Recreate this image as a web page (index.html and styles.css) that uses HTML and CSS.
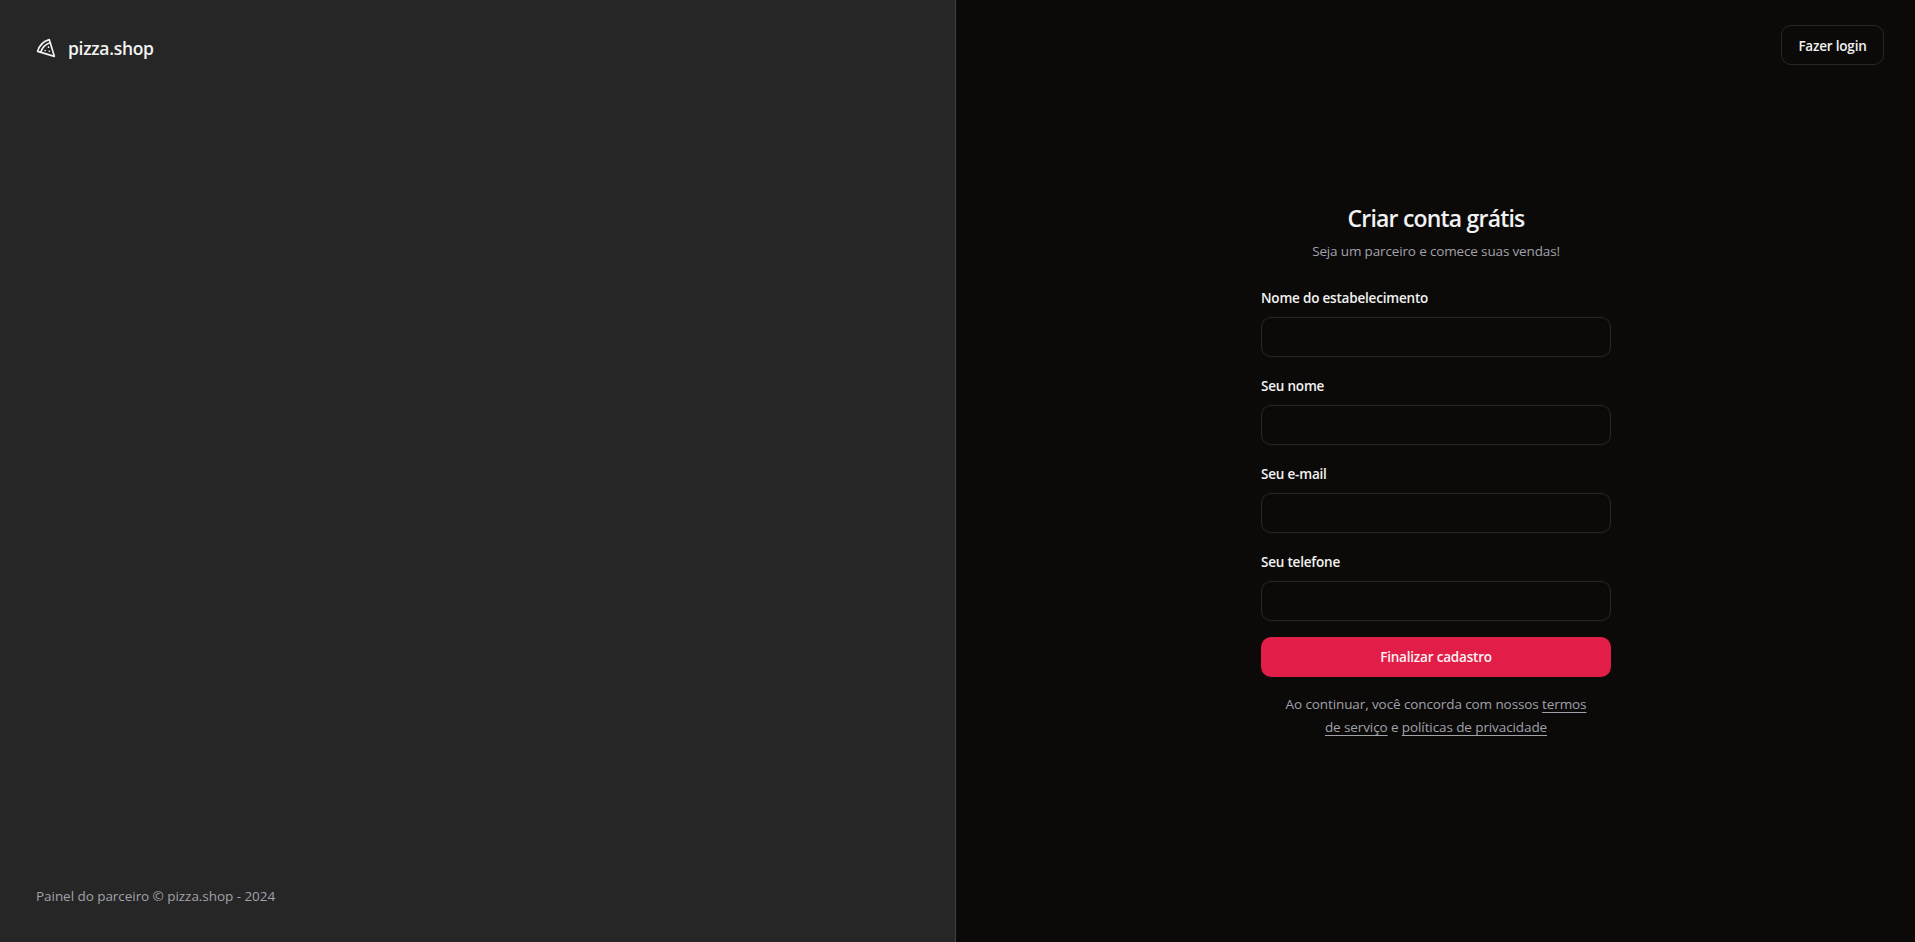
FILE: index.html
```html
<!DOCTYPE html>
<html lang="pt-BR">
<head>
<meta charset="utf-8">
<title>Cadastro | pizza.shop</title>
<link rel="stylesheet" href="styles.css">
</head>
<body>
<div class="page">
  <aside class="brand-panel">
    <div class="brand">
      <svg class="brand-icon" viewBox="0 0 24 24" fill="none" stroke="currentColor" stroke-width="2" stroke-linecap="round" stroke-linejoin="round" aria-hidden="true">
        <path d="M15 11h.01"/><path d="M11 15h.01"/><path d="M16 16h.01"/>
        <path d="m2 16 20 6-6-20A20 20 0 0 0 2 16"/>
        <path d="M5.71 17.11a17.04 17.04 0 0 1 11.4-11.4"/>
      </svg>
      <span class="brand-name">pizza.shop</span>
    </div>
    <footer class="brand-footer">Painel do parceiro © pizza.shop - 2024</footer>
  </aside>
  <main class="form-panel">
    <a class="login-link" href="#">Fazer login</a>
    <div class="form-wrap">
      <div class="form-head">
        <h1 class="form-title">Criar conta grátis</h1>
        <p class="form-sub">Seja um parceiro e comece suas vendas!</p>
      </div>
      <form class="form">
        <div class="field"><label class="label" for="a">Nome do estabelecimento</label><input class="input" id="a" type="text"></div>
        <div class="field"><label class="label" for="b">Seu nome</label><input class="input" id="b" type="text"></div>
        <div class="field"><label class="label" for="c">Seu e-mail</label><input class="input" id="c" type="email"></div>
        <div class="field"><label class="label" for="d">Seu telefone</label><input class="input" id="d" type="tel"></div>
        <button class="submit" type="button">Finalizar cadastro</button>
        <p class="legal">Ao continuar, você concorda com nossos <a href="#">termos de serviço</a> e <a href="#">políticas de privacidade</a></p>
      </form>
    </div>
  </main>
</div>
</body>
</html>
```
FILE: styles.css
```css
* { box-sizing: border-box; }
html, body { margin: 0; height: 100%; }
body {
  background: #0c0a09;
  color: #f2f2f2;
  font-family: "Open Sans", "Noto Sans", sans-serif;
  font-size: 14px;
}
.page {
  display: grid;
  grid-template-columns: 956px 959px;
  height: 942px;
}
.brand-panel {
  display: flex;
  flex-direction: column;
  justify-content: space-between;
  padding: 36px;
  background: #262626;
  border-right: 1px solid #3f3f3f;
}
.brand {
  display: flex;
  align-items: center;
  gap: 12px;
  height: 24px;
  font-size: 17.5px;
  font-weight: 600;
  color: #f2f2f2;
}
.brand-icon { width: 20px; height: 20px; }
.brand-name { letter-spacing: -0.3px; }
.brand-footer { color: #a1a1aa; font-size: 13.5px; line-height: 20px; letter-spacing: -0.05px; }
.form-panel {
  position: relative;
  display: flex;
  align-items: center;
  justify-content: center;
  background: #0c0a09;
}
.login-link {
  position: absolute;
  top: 25px;
  right: 31px;
  display: flex;
  align-items: center;
  justify-content: center;
  width: 103px;
  height: 40px;
  padding-top: 1px;
  border: 1px solid #27272a;
  border-radius: 10px;
  color: #f2f2f2;
  font-size: 13.5px;
  font-weight: 600;
  text-decoration: none;
  letter-spacing: -0.2px;
}
.form-wrap { width: 350px; margin-left: 1px; display: flex; flex-direction: column; gap: 24px; padding-bottom: 1px; }
.form-head { text-align: center; }
.form-title { margin: 0 0 7px; font-size: 23px; line-height: 32px; font-weight: 600; letter-spacing: -0.8px; color: #f2f2f2; }
.form-sub { margin: 0; font-size: 13.5px; line-height: 20px; color: #a1a1aa; letter-spacing: -0.15px; }
.form { display: flex; flex-direction: column; gap: 16px; }
.field { display: flex; flex-direction: column; gap: 12px; padding-top: 6px; }
.label { font-size: 13.5px; line-height: 14px; font-weight: 600; color: #f2f2f2; letter-spacing: -0.2px; }
.input {
  height: 40px;
  width: 100%;
  background: transparent;
  border: 1px solid #27272a;
  border-radius: 10px;
  color: #f2f2f2;
}
.submit {
  height: 40px;
  border: 0;
  border-radius: 10px;
  background: #e11d48;
  color: #fff1f2;
  font: 600 13.5px "Open Sans", "Noto Sans", sans-serif;
  letter-spacing: -0.2px;
}
.legal {
  margin: 0;
  padding: 0 24px;
  text-align: center;
  font-size: 13.5px;
  line-height: 23px;
  color: #a1a1aa;
  letter-spacing: -0.1px;
}
.legal a { color: inherit; text-decoration: underline; text-decoration-thickness: 1px; text-underline-offset: 3px; }
```
